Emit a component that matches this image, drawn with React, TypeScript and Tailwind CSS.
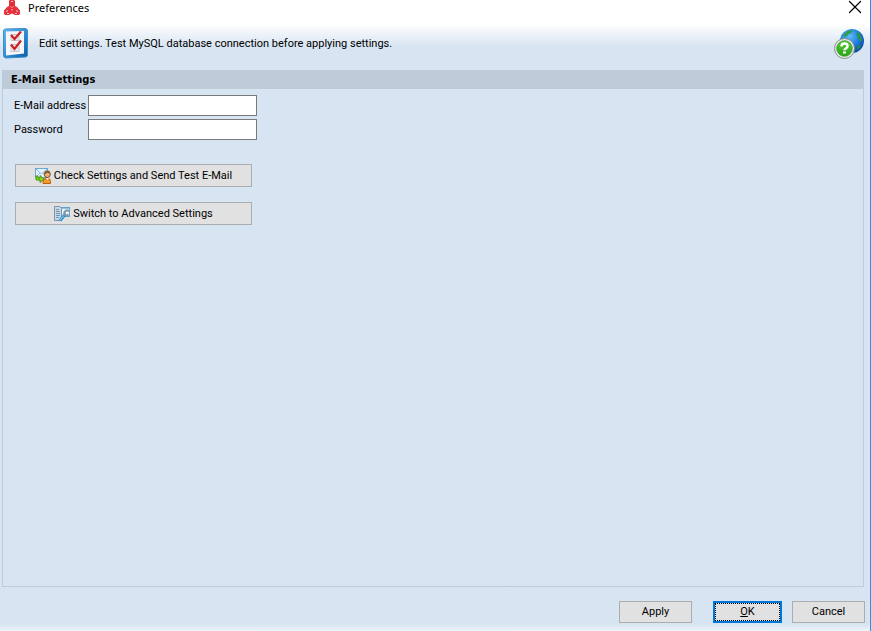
import type { ReactNode } from 'react';
import { X } from 'lucide-react';

function AppLogo() {
  return (
    <svg width="16" height="16" viewBox="0 0 16 16" aria-hidden="true">
      <path d="M5.500 0H10L11 1V6L13 7L16 10.500V14L15 15H11L8 13.500L5 15H1L0 14V10.500L3 7L5 6V1z" fill="#e5323d" />
      <path d="M7 1.500h2M6.500 6.500l1 1M9.500 6.500l-1 1M2 11.500l2-1M14 11.500l-2-1M3 13.500h2M11 13.500h2M8 9v1.500" stroke="#f9c3c6" fill="none" />
      <path d="M8 3v2M5.500 10.500L4.500 11.500M10.500 10.500l1 1" stroke="#c31d29" fill="none" />
    </svg>
  );
}

function ChecklistIcon() {
  return (
    <svg width="26" height="32" viewBox="0 0 26 32" aria-hidden="true">
      <defs>
        <linearGradient id="frame" x1="0" y1="0" x2="1" y2="1">
          <stop offset="0" stopColor="#6bbcf0" />
          <stop offset="0.6" stopColor="#2585cf" />
          <stop offset="1" stopColor="#0f5ea6" />
        </linearGradient>
      </defs>
      <path d="M3 1 L22 0.500 Q24.500 0.500 24.500 3 L24.500 27 Q24.500 29 22.500 29 L3 30 Q0.500 30 0.500 27 V3 Q0.500 1 3 1Z" fill="url(#frame)" stroke="#3d8cc6" strokeWidth="1" />
      <path d="M3 3.500 L21 3 V25.500 L3 27.500Z" fill="#f6f6f8" />
      <path d="M8 6.500h8v6H8zM8 16.500h8v7H8z" fill="#e6e8ec" stroke="#c3c7cf" />
      <path d="M8 7l3.500 4L18 3.500M8 16.500l3.500 4.500L18 12.500" stroke="#cf2024" strokeWidth="2.200" fill="none" />
    </svg>
  );
}

function HelpGlobeIcon() {
  return (
    <svg width="30" height="32" viewBox="0 0 30 32" aria-hidden="true">
      <defs>
        <radialGradient id="globe" cx="0.4" cy="0.3" r="0.75">
          <stop offset="0" stopColor="#62bdf8" />
          <stop offset="0.5" stopColor="#2183e0" />
          <stop offset="1" stopColor="#0b3fa4" />
        </radialGradient>
        <linearGradient id="badge" x1="0" y1="0" x2="0" y2="1">
          <stop offset="0" stopColor="#5cc83c" />
          <stop offset="1" stopColor="#25a314" />
        </linearGradient>
      </defs>
      <circle cx="18" cy="13" r="12" fill="url(#globe)" />
      <path d="M9 8l3-4 5-2 2 1-2 2-2 1-2 2-2 1z" fill="#2f9e4e" />
      <path d="M24 4l2 2 2 5v2l-2 0-1-2-2-1 1-2-2-2z" fill="#279546" />
      <path d="M23 18l4-1-1 3-3 2z" fill="#1f8a4a" />
      <circle cx="10.500" cy="20.500" r="10" fill="#e9ece9" stroke="#858a85" />
      <circle cx="10.500" cy="20.500" r="7.800" fill="url(#badge)" stroke="#3a9a2c" strokeWidth="0.800" />
      <path d="M7.500 18.500q0-3 3-3t3 2.500q0 1.500-1.500 2.300t-1.500 2" stroke="#fff" strokeWidth="2.500" fill="none" />
      <rect x="9" y="23.500" width="3" height="2" fill="#fff" />
    </svg>
  );
}

function SendTestIcon() {
  return (
    <svg width="16" height="16" viewBox="0 0 16 16" aria-hidden="true">
      <rect x="0.500" y="0.500" width="12" height="9" fill="#e6f3fc" stroke="#68a9d8" />
      <path d="M1 1l5.500 5L12 1M1 9l4-4M12 9L8 5" stroke="#85bce2" fill="none" />
      <path d="M1 8v4h4v2.500L9 11 5 7.500V10H3V8z" fill="#8ed41c" stroke="#3f8c0c" strokeWidth="0.900" />
      <path d="M8 15.500v-2q0-3 3-3h2q2.500 0 2.500 3v2z" fill="#f0992c" stroke="#b9620d" />
      <path d="M11 10h3l-1.500 2z" fill="#fff" />
      <circle cx="12.300" cy="6.500" r="3" fill="#e7b27b" stroke="#7c4a1f" />
      <path d="M9.300 6q0-3.500 3-3.500t3 3q-2 0-3.200-1-1 1.500-2.800 1.500z" fill="#8a5528" />
    </svg>
  );
}

function AdvancedIcon() {
  return (
    <svg width="16" height="16" viewBox="0 0 16 16" aria-hidden="true">
      <rect x="5.500" y="1.500" width="10" height="9" fill="#e3f2fb" stroke="#62a3d0" />
      <path d="M6 2.500h9" stroke="#8cc3e6" />
      <path d="M0.500 0.500h5l2 2v12h-7z" fill="#c9d8e6" stroke="#7694af" />
      <path d="M2 3.500h3M2 5.500h4M2 7.500h4M2 9.500h4M2 11.500h3" stroke="#7793ad" />
      <path d="M6 14.500L11.500 8" stroke="#2d8fc8" strokeWidth="3" />
      <path d="M6 14L10 9.500" stroke="#8fd8f7" strokeWidth="1" />
      <path d="M15 5.500q-1.500-2-3.500-.5t-.5 3.500 3.500 0" stroke="#8394a5" strokeWidth="2" fill="none" />
    </svg>
  );
}

function Field({ id, label, type }: { id: string; label: string; type: string }) {
  return (
    <div className="flex items-center">
      <label htmlFor={id} className="w-[74px] whitespace-nowrap">{label}</label>
      <input id={id} type={type} className="h-[21px] w-[169px] border border-[#7a7a7a] bg-white px-1 outline-none" />
    </div>
  );
}

function PushButton({ className, children }: { className: string; children: ReactNode }) {
  return (
    <button
      type="button"
      className={`flex items-center justify-center whitespace-nowrap border border-[#adadad] bg-[#e1e1e1] ${className}`}
    >
      {children}
    </button>
  );
}

export default function App() {
  return (
    <div className="flex min-h-screen flex-col border-r border-[#2e8fe8] bg-[#d7e4f1] font-[Roboto,'DejaVu_Sans',sans-serif] text-[11px] leading-4 text-black">
      {/* Title bar */}
      <header className="flex h-6 items-start justify-between bg-white pl-1 pr-1">
        <div className="flex gap-2">
          <AppLogo />
          <h1 className="font-['Noto_Sans',sans-serif]">Preferences</h1>
        </div>
        <button type="button" aria-label="Close" className="-mt-1">
          <X size={22} strokeWidth={1.3} />
        </button>
      </header>

      {/* Hint row */}
      <div className="flex h-[46px] items-start justify-between bg-linear-to-b from-white to-[#d7e4f1] to-50% pl-[3px] pr-[6px] pt-1">
        <div className="flex items-center gap-[10px]">
          <ChecklistIcon />
          <p>Edit settings. Test MySQL database connection before applying settings.</p>
        </div>
        <button type="button" aria-label="Help">
          <HelpGlobeIcon />
        </button>
      </div>

      <main className="ml-[2px] mr-[6px] flex flex-1 flex-col border border-t-0 border-[#becbd8]">
        <h2 className="h-[19px] bg-[#becbd8] pl-2 pt-[2px] font-['DejaVu_Sans_Condensed','DejaVu_Sans',sans-serif] font-bold">
          E-Mail Settings
        </h2>
        <form className="flex flex-col items-start px-[11px] pt-[6px]">
          <div className="flex flex-col gap-[3px]">
            <Field id="email" label="E-Mail address" type="email" />
            <Field id="password" label="Password" type="password" />
          </div>
          <div className="ml-px mt-6 flex w-[237px] flex-col gap-[15px]">
            <PushButton className="h-[23px] gap-[3px]">
              <SendTestIcon />
              Check Settings and Send Test E-Mail
            </PushButton>
            <PushButton className="h-[23px] gap-[3px]">
              <AdvancedIcon />
              Switch to Advanced Settings
            </PushButton>
          </div>
        </form>
      </main>

      {/* Dialog buttons */}
      <footer className="flex h-11 items-start justify-end bg-linear-to-b from-[#d7e4f1] from-85% to-[#eef4fa] pr-[5px] pt-[14px]">
        <PushButton className="h-[22px] w-[73px]">Apply</PushButton>
        <button type="button" className="ml-[21px] mr-[10px] h-[22px] w-[69px] border-2 border-[#0078d7] bg-[#e1e1e1]">
          <span className="flex h-full items-center justify-center border border-dotted border-black">
            <span className="underline">O</span>K
          </span>
        </button>
        <PushButton className="h-[22px] w-[73px]">Cancel</PushButton>
      </footer>
    </div>
  );
}
